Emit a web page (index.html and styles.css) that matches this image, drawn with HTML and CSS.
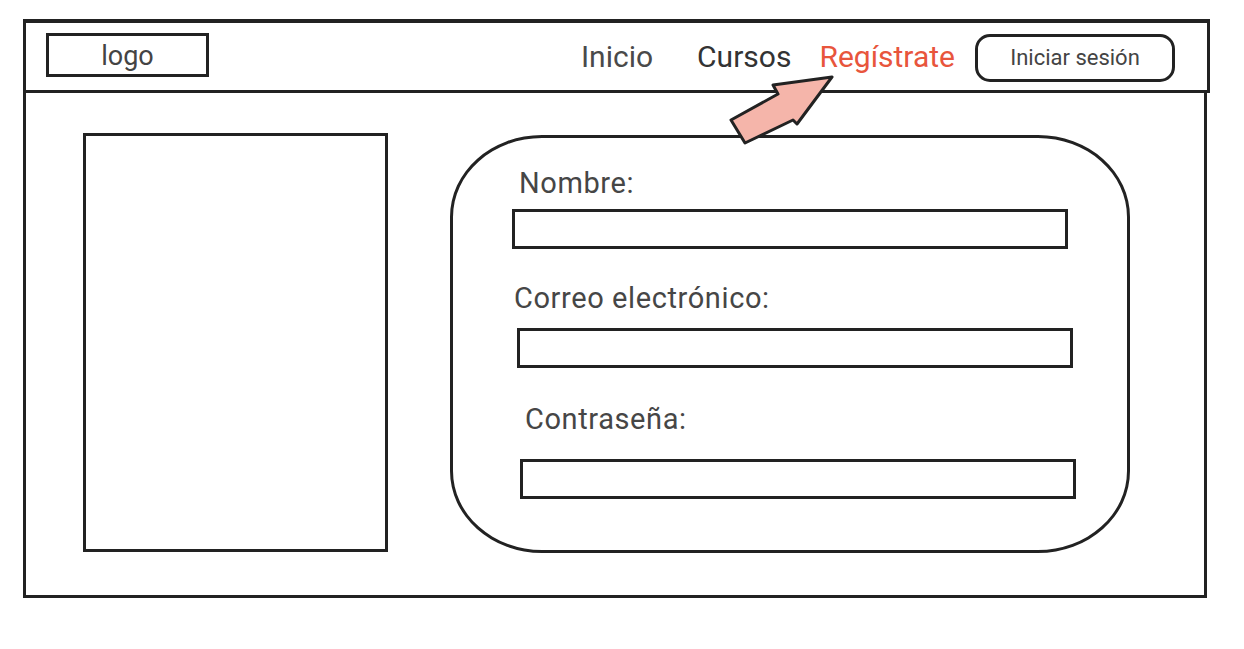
FILE: index.html
```html
<!DOCTYPE html>
<html lang="es">
<head>
    <meta charset="UTF-8" />
    <meta name="viewport" content="width=device-width, initial-scale=1.0"/>
    <title>Regístrate</title>
    <link rel="stylesheet" href="styles.css">
</head>
<body>
<div class="sketch">
    <header class="topbar">
        <div class="logo">logo</div>
        <nav class="menu">
            <a class="menu-link link-inicio" href="#">Inicio</a>
            <a class="menu-link link-cursos" href="#">Cursos</a>
            <a class="menu-link link-registro" href="#">Regístrate</a>
            <a class="login-btn" href="#">Iniciar sesión</a>
        </nav>
    </header>

    <!-- arrow pointing at the current page -->
    <svg class="pointer" width="108" height="72" viewBox="0 0 108 72">
        <polygon points="104,2 45,10 50,19 3,45 17,68 65,45 69,49" fill="#f5b5aa" stroke="#222" stroke-width="3" stroke-linejoin="round"/>
    </svg>

    <main class="page">
        <div class="picture"></div>

        <form class="signup">
            <label class="field-label label-nombre">Nombre:</label>
            <input class="field field-nombre" type="text">

            <label class="field-label label-correo">Correo electrónico:</label>
            <input class="field field-correo" type="email">

            <label class="field-label label-clave">Contraseña:</label>
            <input class="field field-clave" type="password">
        </form>
    </main>
</div>
</body>
</html>
```

FILE: styles.css
```css
body {
    margin: 0;
    font-family: Roboto, "Liberation Sans", sans-serif;
    background: #fff;
    color: #444;
}

.sketch {
    position: relative;
    margin: 19px 0 0 23px;
    width: 1187px;
}

.topbar {
    box-sizing: border-box;
    display: flex;
    align-items: center;
    width: 1187px;
    height: 74px;
    padding: 0 32px 0 20px;
    border: 3px solid #222;
    border-top-width: 4px;
}

.logo {
    box-sizing: border-box;
    width: 163px;
    height: 44px;
    margin-top: -3px;
    border: 3px solid #222;
    font-size: 27px;
    line-height: 40px;
    text-align: center;
    color: #444;
}

.menu {
    display: flex;
    align-items: center;
    margin-left: auto;
}

.menu-link {
    font-size: 30px;
    text-decoration: none;
    margin-top: 0;
}

.link-inicio {
    color: #4a4a4a;
    margin-right: 44px;
}

.link-cursos {
    color: #333;
    margin-right: 28px;
}

.link-registro {
    color: #e8553c;
    margin-right: 20px;
}

.login-btn {
    box-sizing: border-box;
    width: 200px;
    height: 48px;
    margin-top: 3px;
    border: 3px solid #222;
    border-radius: 15px;
    font-size: 22px;
    line-height: 42px;
    text-align: center;
    text-decoration: none;
    color: #444;
}

.pointer {
    position: absolute;
    left: 705px;
    top: 56px;
}

.page {
    box-sizing: border-box;
    display: flex;
    align-items: flex-start;
    width: 1184px;
    height: 505px;
    padding: 40px 0 0 57px;
    border: 3px solid #222;
    border-top: none;
}

.picture {
    box-sizing: border-box;
    width: 305px;
    height: 419px;
    border: 3px solid #222;
}

.signup {
    box-sizing: border-box;
    display: flex;
    flex-direction: column;
    align-items: flex-start;
    width: 680px;
    height: 418px;
    margin: 2px 0 0 62px;
    padding-top: 31px;
    border: 3px solid #222;
    border-radius: 92px / 82px;
}

.field-label {
    font-size: 29px;
    line-height: 29px;
    letter-spacing: 0.6px;
    color: #464646;
}

.field {
    box-sizing: border-box;
    width: 556px;
    height: 40px;
    border: 3px solid #222;
    border-radius: 0;
    background: #fff;
    margin: 0;
}

.label-nombre { margin-left: 66px; }
.field-nombre { margin: 11px 0 0 59px; }

.label-correo { margin: 35px 0 0 61px; }
.field-correo { margin: 15px 0 0 64px; }

.label-clave { margin: 37px 0 0 72px; }
.field-clave { margin: 25px 0 0 67px; }
```
